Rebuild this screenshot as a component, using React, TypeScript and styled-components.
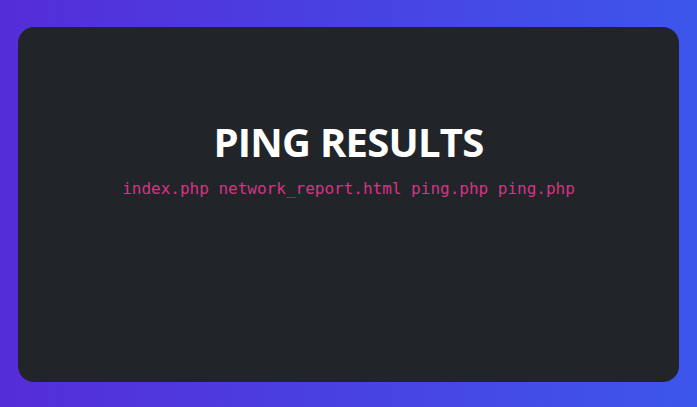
import React from "react";
import styled, { createGlobalStyle } from "styled-components";

const Global = createGlobalStyle`
  html, body { margin: 0; padding: 0; }
  body {
    font-family: "Open Sans", "Noto Sans", sans-serif;
    background: linear-gradient(90deg, #552dd8 0%, #3d56ec 100%);
    min-height: 407px;
  }
`;

const Page = styled.div`
  box-sizing: border-box;
  width: 697px;
  height: 407px;
  padding: 27px 18px 25px 18px;
  display: flex;
`;

const Card = styled.div`
  flex: 1;
  background: #212529;
  border-radius: 16px;
  display: flex;
  flex-direction: column;
  align-items: center;
  padding-top: 91px;
`;

const Title = styled.h1`
  margin: 0;
  color: #ffffff;
  font-family: "Open Sans", "Noto Sans", sans-serif;
  font-weight: 700;
  font-size: 40px;
  line-height: 1.2;
  letter-spacing: -0.75px;
`;

const Files = styled.code`
  margin-top: 11px;
  color: #d63384;
  font-family: "DejaVu Sans Mono", "Liberation Mono", monospace;
  font-size: 16px;
  line-height: 1.5;
`;

export default function App() {
  const files = ["index.php", "network_report.html", "ping.php", "ping.php"];
  return (
    <>
      <Global />
      <Page>
        <Card>
          <Title>PING RESULTS</Title>
          <Files>{files.join(" ")}</Files>
        </Card>
      </Page>
    </>
  );
}
